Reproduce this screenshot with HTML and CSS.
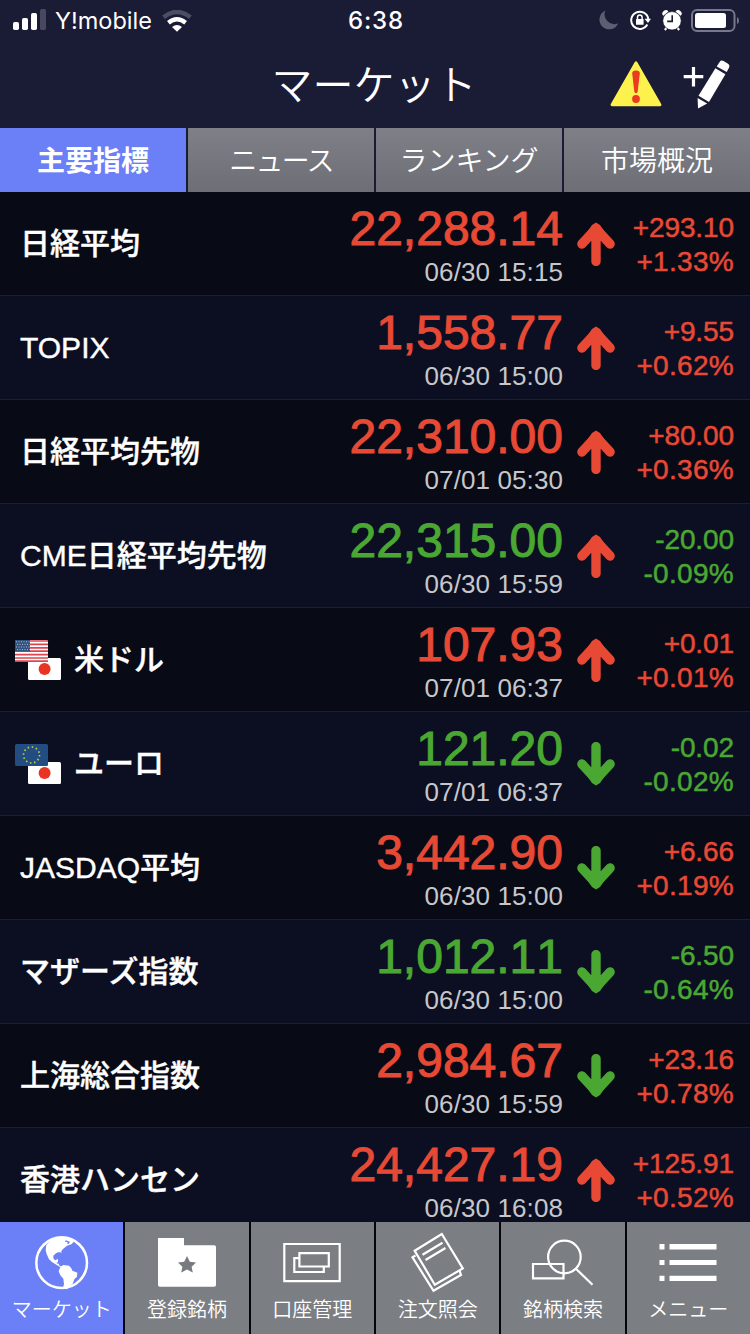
FILE: index.html
```html
<!DOCTYPE html>
<html lang="ja">
<head>
    <meta charset="UTF-8">
    <meta name="viewport" content="width=device-width, initial-scale=1.0">
    <title>マーケット</title>
    <link rel="stylesheet" href="styles.css">
</head>
<body>
    <svg class="defs">
        <symbol id="arrow" viewBox="0 0 38 44">
            <path d="M19 7V39.4M4.9 22L19 6.6L33.1 22" fill="none" stroke="currentColor" stroke-width="9.4" stroke-linecap="round" stroke-linejoin="round"/>
            <path d="M19 .6L15 3L9 12L19 15L29 12L23 3Z" fill="currentColor"/>
        </symbol>
        <symbol id="jp" viewBox="0 0 33 22">
            <rect width="33" height="22" rx="1.5" fill="#fff"/>
            <circle cx="16.6" cy="11" r="6" fill="#e93323"/>
        </symbol>
    </svg>

    <div class="app">
        <div class="status">
            <div class="status-left">
                <svg class="signal" width="33" height="22" viewBox="0 0 33 22">
                    <rect x="0" y="13" width="6" height="8" rx="1.7" fill="#fff"/>
                    <rect x="9" y="9" width="6" height="12" rx="1.7" fill="#fff"/>
                    <rect x="18" y="4" width="6" height="17" rx="1.7" fill="#fff"/>
                    <rect x="27" y="0" width="6" height="21" rx="1.7" fill="#484960"/>
                </svg>
                <span class="carrier">Y!mobile</span>
                <svg class="wifi" width="30" height="22" viewBox="0 0 30 22">
                    <path d="M1.6 7.2Q15-3.2 28.4 7.2" fill="none" stroke="#4c4d63" stroke-width="4.6"/>
                    <path d="M6.4 12.7Q15 6 23.6 12.7" fill="none" stroke="#fff" stroke-width="4.4"/>
                    <path d="M10 17Q15 13.2 20 17L15 21.8Z" fill="#fff"/>
                </svg>
            </div>
            <div class="time">6:38</div>
            <div class="status-right">
                <svg width="20" height="20" viewBox="0 0 20 20">
                    <path d="M6.5.5A9.8 9.8 0 1 0 19.3 13.3A9.7 9.7 0 0 1 6.5.5Z" fill="#5d5e72"/>
                </svg>
                <svg class="rotation" width="21" height="21" viewBox="0 0 21 21">
                    <path d="M17.3 14.6A8.6 8.6 0 1 1 18.3 9" fill="none" stroke="#fff" stroke-width="2"/>
                    <path d="M14.5 8.7H21L18 13Z" fill="#fff"/>
                    <rect x="6" y="9" width="7.6" height="5.8" rx=".6" fill="#fff"/>
                    <path d="M7.5 9.5V7.2a2.3 2.3 0 0 1 4.6 0V9.5" fill="none" stroke="#fff" stroke-width="1.5"/>
                </svg>
                <svg class="alarm" width="20" height="21" viewBox="0 0 20 21">
                    <path d="M4.5 18L2.8 20M15.5 18L17.2 20" stroke="#fff" stroke-width="2"/>
                    <path d="M1.6 5.4A2.6 2.6 0 0 1 6 1.9M18.4 5.4A2.6 2.6 0 0 0 14 1.9" fill="#fff" stroke="#fff" stroke-width="1.2"/>
                    <circle cx="10" cy="10.8" r="9.2" fill="#fff" stroke="#1a1b35" stroke-width=".6"/>
                    <path d="M10.2 5.2V11.4H5.2" fill="none" stroke="#1a1b35" stroke-width="1.6"/>
                </svg>
                <svg class="battery" width="48" height="23" viewBox="0 0 48 23">
                    <rect x="1" y="1" width="42.5" height="21" rx="5" fill="none" stroke="#777889" stroke-width="2"/>
                    <rect x="4" y="4" width="31" height="15" rx="2.5" fill="#fff"/>
                    <path d="M46 8Q48 9 48 11.5T46 15Z" fill="#777889"/>
                </svg>
            </div>
        </div>

        <div class="header">
            <h1 class="title">マーケット</h1>
            <div class="header-actions">
                <svg width="52" height="46" viewBox="0 0 52 46">
                    <path d="M26 1.8L50 43.8H2Z" fill="#fdf24d" stroke="#fdf24d" stroke-width="2.8" stroke-linejoin="round"/>
                    <path d="M22.2 12.5Q22 9.5 26 9.5T29.8 12.5L27.7 30.5Q27.4 32.2 26 32.2T24.3 30.5Z" fill="#ea3a1f"/>
                    <circle cx="26" cy="38" r="3.9" fill="#ea3a1f"/>
                </svg>
                <svg width="47" height="49" viewBox="0 0 47 49">
                    <path d="M.7 16.7H20.3M10.5 7V26.5" stroke="#fff" stroke-width="3.2"/>
                    <path d="M36.6 2Q38-.2 40.6 1.1L45 3.8Q47.1 5.2 46 7.7L43.7 12.1L33.7 6.6Z" fill="#fff"/>
                    <path d="M32.4 8.2L42.4 14.2L26 42L15.5 35.7Z" fill="#fff"/>
                    <path d="M14.6 38L24.2 43.5L15 48.4Z" fill="#fff"/>
                </svg>
            </div>
        </div>

        <div class="tabs">
            <div class="tab active">主要指標</div>
            <div class="tab tight">ニュース</div>
            <div class="tab">ランキング</div>
            <div class="tab">市場概況</div>
        </div>

        <div class="list">
            <div class="row">
                <div class="name">日経平均</div>
                <div class="quote"><div class="price up">22,288.14</div><div class="date">06/30 15:15</div></div>
                <svg class="arrow up"><use href="#arrow"/></svg>
                <div class="change up">+293.10<br>+1.33%</div>
            </div>
            <div class="row">
                <div class="name">TOPIX</div>
                <div class="quote"><div class="price up">1,558.77</div><div class="date">06/30 15:00</div></div>
                <svg class="arrow up"><use href="#arrow"/></svg>
                <div class="change up">+9.55<br>+0.62%</div>
            </div>
            <div class="row">
                <div class="name">日経平均先物</div>
                <div class="quote"><div class="price up">22,310.00</div><div class="date">07/01 05:30</div></div>
                <svg class="arrow up"><use href="#arrow"/></svg>
                <div class="change up">+80.00<br>+0.36%</div>
            </div>
            <div class="row">
                <div class="name">CME日経平均先物</div>
                <div class="quote"><div class="price down">22,315.00</div><div class="date">06/30 15:59</div></div>
                <svg class="arrow up"><use href="#arrow"/></svg>
                <div class="change down">-20.00<br>-0.09%</div>
            </div>
            <div class="row">
                <svg class="flags" viewBox="0 0 46 40">
                    <use href="#jp" x="13" y="18" width="33" height="22"/>
                    <rect width="33" height="22" rx="1.5" fill="#fff"/>
                    <path d="M0 1H33M0 4.4H33M0 7.8H33M0 11.2H33M0 14.6H33M0 18H33M0 21.2H33" stroke="#dc4550" stroke-width="1.7"/>
                    <rect width="15" height="11.5" fill="#31527f"/>
                    <path d="M1 1.8H15M2 4.4H15M1 7H15M2 9.6H15" stroke="#aebfd2" stroke-width="1" stroke-dasharray="1 1.5"/>
                </svg>
                <div class="name">米ドル</div>
                <div class="quote"><div class="price up">107.93</div><div class="date">07/01 06:37</div></div>
                <svg class="arrow up"><use href="#arrow"/></svg>
                <div class="change up">+0.01<br>+0.01%</div>
            </div>
            <div class="row">
                <svg class="flags" viewBox="0 0 46 40">
                    <use href="#jp" x="13" y="18" width="33" height="22"/>
                    <rect width="33" height="22" rx="1.5" fill="#234d80"/>
                    <circle cx="16.5" cy="11" r="8" fill="none" stroke="#c0cd4c" stroke-width="1.7" stroke-dasharray="1.5 2.689"/>
                </svg>
                <div class="name">ユーロ</div>
                <div class="quote"><div class="price down">121.20</div><div class="date">07/01 06:37</div></div>
                <svg class="arrow down"><use href="#arrow"/></svg>
                <div class="change down">-0.02<br>-0.02%</div>
            </div>
            <div class="row">
                <div class="name">JASDAQ平均</div>
                <div class="quote"><div class="price up">3,442.90</div><div class="date">06/30 15:00</div></div>
                <svg class="arrow down"><use href="#arrow"/></svg>
                <div class="change up">+6.66<br>+0.19%</div>
            </div>
            <div class="row">
                <div class="name">マザーズ指数</div>
                <div class="quote"><div class="price down">1,012.11</div><div class="date">06/30 15:00</div></div>
                <svg class="arrow down"><use href="#arrow"/></svg>
                <div class="change down">-6.50<br>-0.64%</div>
            </div>
            <div class="row">
                <div class="name">上海総合指数</div>
                <div class="quote"><div class="price up">2,984.67</div><div class="date">06/30 15:59</div></div>
                <svg class="arrow down"><use href="#arrow"/></svg>
                <div class="change up">+23.16<br>+0.78%</div>
            </div>
            <div class="row">
                <div class="name">香港ハンセン</div>
                <div class="quote"><div class="price up">24,427.19</div><div class="date">06/30 16:08</div></div>
                <svg class="arrow up"><use href="#arrow"/></svg>
                <div class="change up">+125.91<br>+0.52%</div>
            </div>
        </div>

        <div class="nav">
            <div class="nav-item active">
                <svg viewBox="0 0 192 192">
                    <circle cx="95" cy="101" r="76" fill="none" stroke="#fff" stroke-width="7.5"/>
                    <path d="M49 48L62 34L90 24L112 25L126 32L132 38L124 46L111 50L99 60L94 66L94 74L92 70L84 70L76 74L70 80L70 88L75 94L84 90L84 98L79 103L86 104L89 111L97 111L90 114L79 107L66 99L57 91L49 73L47 62Z" fill="#fff"/>
                    <path d="M107 34L120 38L116 45L112 44L113 40L105 38Z" fill="#6b80f6"/>
                    <path d="M91 114L100 108L117 110L124 118L127 125L142 131L141 143L133 151L128 164L117 174L111 181L99 178L102 165L100 149L91 139L86 127Z" fill="#fff"/>
                </svg>
                <span>マーケット</span>
            </div>
            <div class="nav-item">
                <svg viewBox="0 0 64 64">
                    <path d="M3 9H29V16.2H59.2Q61 16.2 61 18V56Q61 57.8 59.2 57.8H4.8Q3 57.8 3 56Z" fill="#fff"/>
                    <path d="M32 27L34.8 32.7L41 33.4L36.6 37.8L37.8 43.5L32 40.6L26.2 43.5L27.4 37.8L23 33.4L29.2 32.7Z" fill="#777a7e"/>
                </svg>
                <span>登録銘柄</span>
            </div>
            <div class="nav-item">
                <svg viewBox="0 0 64 64" fill="none" stroke="#fff" stroke-width="2.2">
                    <path d="M4.3 15H59.7V52.2H4.3Z"/>
                    <path d="M19.4 24.2H48.8V37.5H19.4Z"/>
                    <path d="M19.4 29.2H14.3V43H43.8V37.5"/>
                </svg>
                <span>口座管理</span>
            </div>
            <div class="nav-item">
                <svg viewBox="0 0 64 64" fill="none" stroke="#fff" stroke-width="2.2">
                    <path d="M8.7 21.8L35.8 5L56.8 39.4L28.8 55.8Z"/>
                    <path d="M9.5 26.5L6.5 28.3L27.5 61.8L55 46L53.5 41.5"/>
                    <path d="M16.5 25.8L36.5 13.8M19.5 31L39.5 19"/>
                </svg>
                <span>注文照会</span>
            </div>
            <div class="nav-item">
                <svg viewBox="0 0 64 64" fill="none" stroke="#fff" stroke-width="2.2">
                    <circle cx="33.4" cy="28" r="16.3"/>
                    <path d="M2 35H32.5V49.3H2ZM44.7 39.5L61.5 55.7"/>
                </svg>
                <span>銘柄検索</span>
            </div>
            <div class="nav-item">
                <svg viewBox="0 0 64 64" fill="#fff">
                    <path d="M3.5 15h5v5.5h-5zM13.5 15h47v5.5h-47zM3.5 31h5v5h-5zM13.5 31h47v5h-47zM3.5 46.8h5v5.2h-5zM13.5 46.8h47v5.2h-47z"/>
                </svg>
                <span>メニュー</span>
            </div>
        </div>
    </div>
</body>
</html>
```
FILE: styles.css
```css
* {
    box-sizing: border-box;
}

body {
    margin: 0;
    background-color: #04050d;
    color: #fff;
    font-family: "Liberation Sans", "Noto Sans CJK JP", sans-serif;
}

svg {
    display: block;
    flex-shrink: 0;
}

.defs {
    display: none;
}

.app {
    width: 750px;
    height: 1334px;
    display: flex;
    flex-direction: column;
    overflow: hidden;
    background-color: #1a1b35;
}

/* status bar */
.status {
    height: 40px;
    display: grid;
    grid-template-columns: 1fr auto 1fr;
    align-items: center;
    padding: 0 11px 0 13px;
    font-family: Inter, sans-serif;
    font-size: 24px;
}

.status-left,
.status-right {
    display: flex;
    align-items: center;
}

.carrier {
    margin: 1px 10px 0 9px;
    font-size: 23.5px;
}

.wifi {
    margin-top: 1px;
}

.time {
    margin-top: 1px;
    font-weight: 500;
    letter-spacing: 0.9px;
}

.status-right {
    justify-content: flex-end;
}

.rotation {
    margin-left: 11px;
}

.alarm {
    margin: 0 9px 0 11px;
}

/* header */
.header {
    height: 88px;
    display: grid;
    grid-template-columns: 1fr auto 1fr;
    align-items: center;
    padding: 0 20px;
}

.title {
    grid-column: 2;
    margin: 0 2px 3px 0;
    font-size: 41px;
    font-weight: 350;
    line-height: 85px;
    font-family: "Noto Sans CJK JP", sans-serif;
}

.header-actions {
    display: flex;
    align-items: center;
    justify-content: flex-end;
    gap: 21px;
}

.tabs {
    height: 64px;
    display: grid;
    grid-template-columns: repeat(4, 1fr);
    gap: 2px;
}

.tab {
    background: linear-gradient(#7f7f87, #6d6e75);
    text-align: center;
    font-size: 28px;
    font-weight: 350;
    line-height: 67px;
}

.tab.tight {
    letter-spacing: -1.8px;
}

.tab.active {
    background: #6b80f6;
    font-weight: 700;
}

/* market list */
.list {
    height: 1030px;
    overflow: hidden;
    background-color: #080a15;
}

.row {
    height: 104px;
    display: flex;
    align-items: center;
    padding: 0 16px 0 20px;
    border-bottom: 1px solid #1b1e34;
    background-color: #080a15;
}

.row:nth-child(even) {
    background-color: #0c0f22;
}

.flags {
    width: 46px;
    height: 40px;
    margin: 0 13px 0 -5px;
}

.name {
    flex: 1;
    font-size: 30px;
    font-weight: 500;
    line-height: 30px;
    -webkit-text-stroke: 0.4px #fff;
}

.quote {
    padding-top: 3px;
    text-align: right;
    font-kerning: none;
}

.price {
    font-size: 48px;
    line-height: 48px;
    -webkit-text-stroke: 1px currentColor;
}

.date {
    margin-top: 6px;
    font-size: 26px;
    line-height: 26px;
    letter-spacing: 0.1px;
    color: #c6c7cb;
}

.arrow {
    width: 38px;
    height: 44px;
    margin-left: 14px;
}

.arrow.down {
    transform: rotate(180deg);
}

.change {
    width: 119px;
    padding-top: 2px;
    text-align: right;
    font-size: 28px;
    line-height: 34px;
    letter-spacing: 0.3px;
    font-kerning: none;
    -webkit-text-stroke: 0.5px currentColor;
}

.change::first-line {
    letter-spacing: -0.1px;
}

.up {
    color: #e74935;
}

.down {
    color: #4aa832;
}

/* bottom navigation */
.nav {
    height: 112px;
    display: grid;
    grid-template-columns: repeat(6, 1fr);
    gap: 2px;
    background-color: #04050d;
}

.nav-item {
    display: flex;
    flex-direction: column;
    align-items: center;
    padding-top: 7px;
    background-color: #7b7e82;
    font-size: 20px;
    font-weight: 350;
    line-height: 34px;
}

.nav-item.active {
    background-color: #6b80f6;
}

.nav-item svg {
    width: 64px;
    height: 64px;
}
```
